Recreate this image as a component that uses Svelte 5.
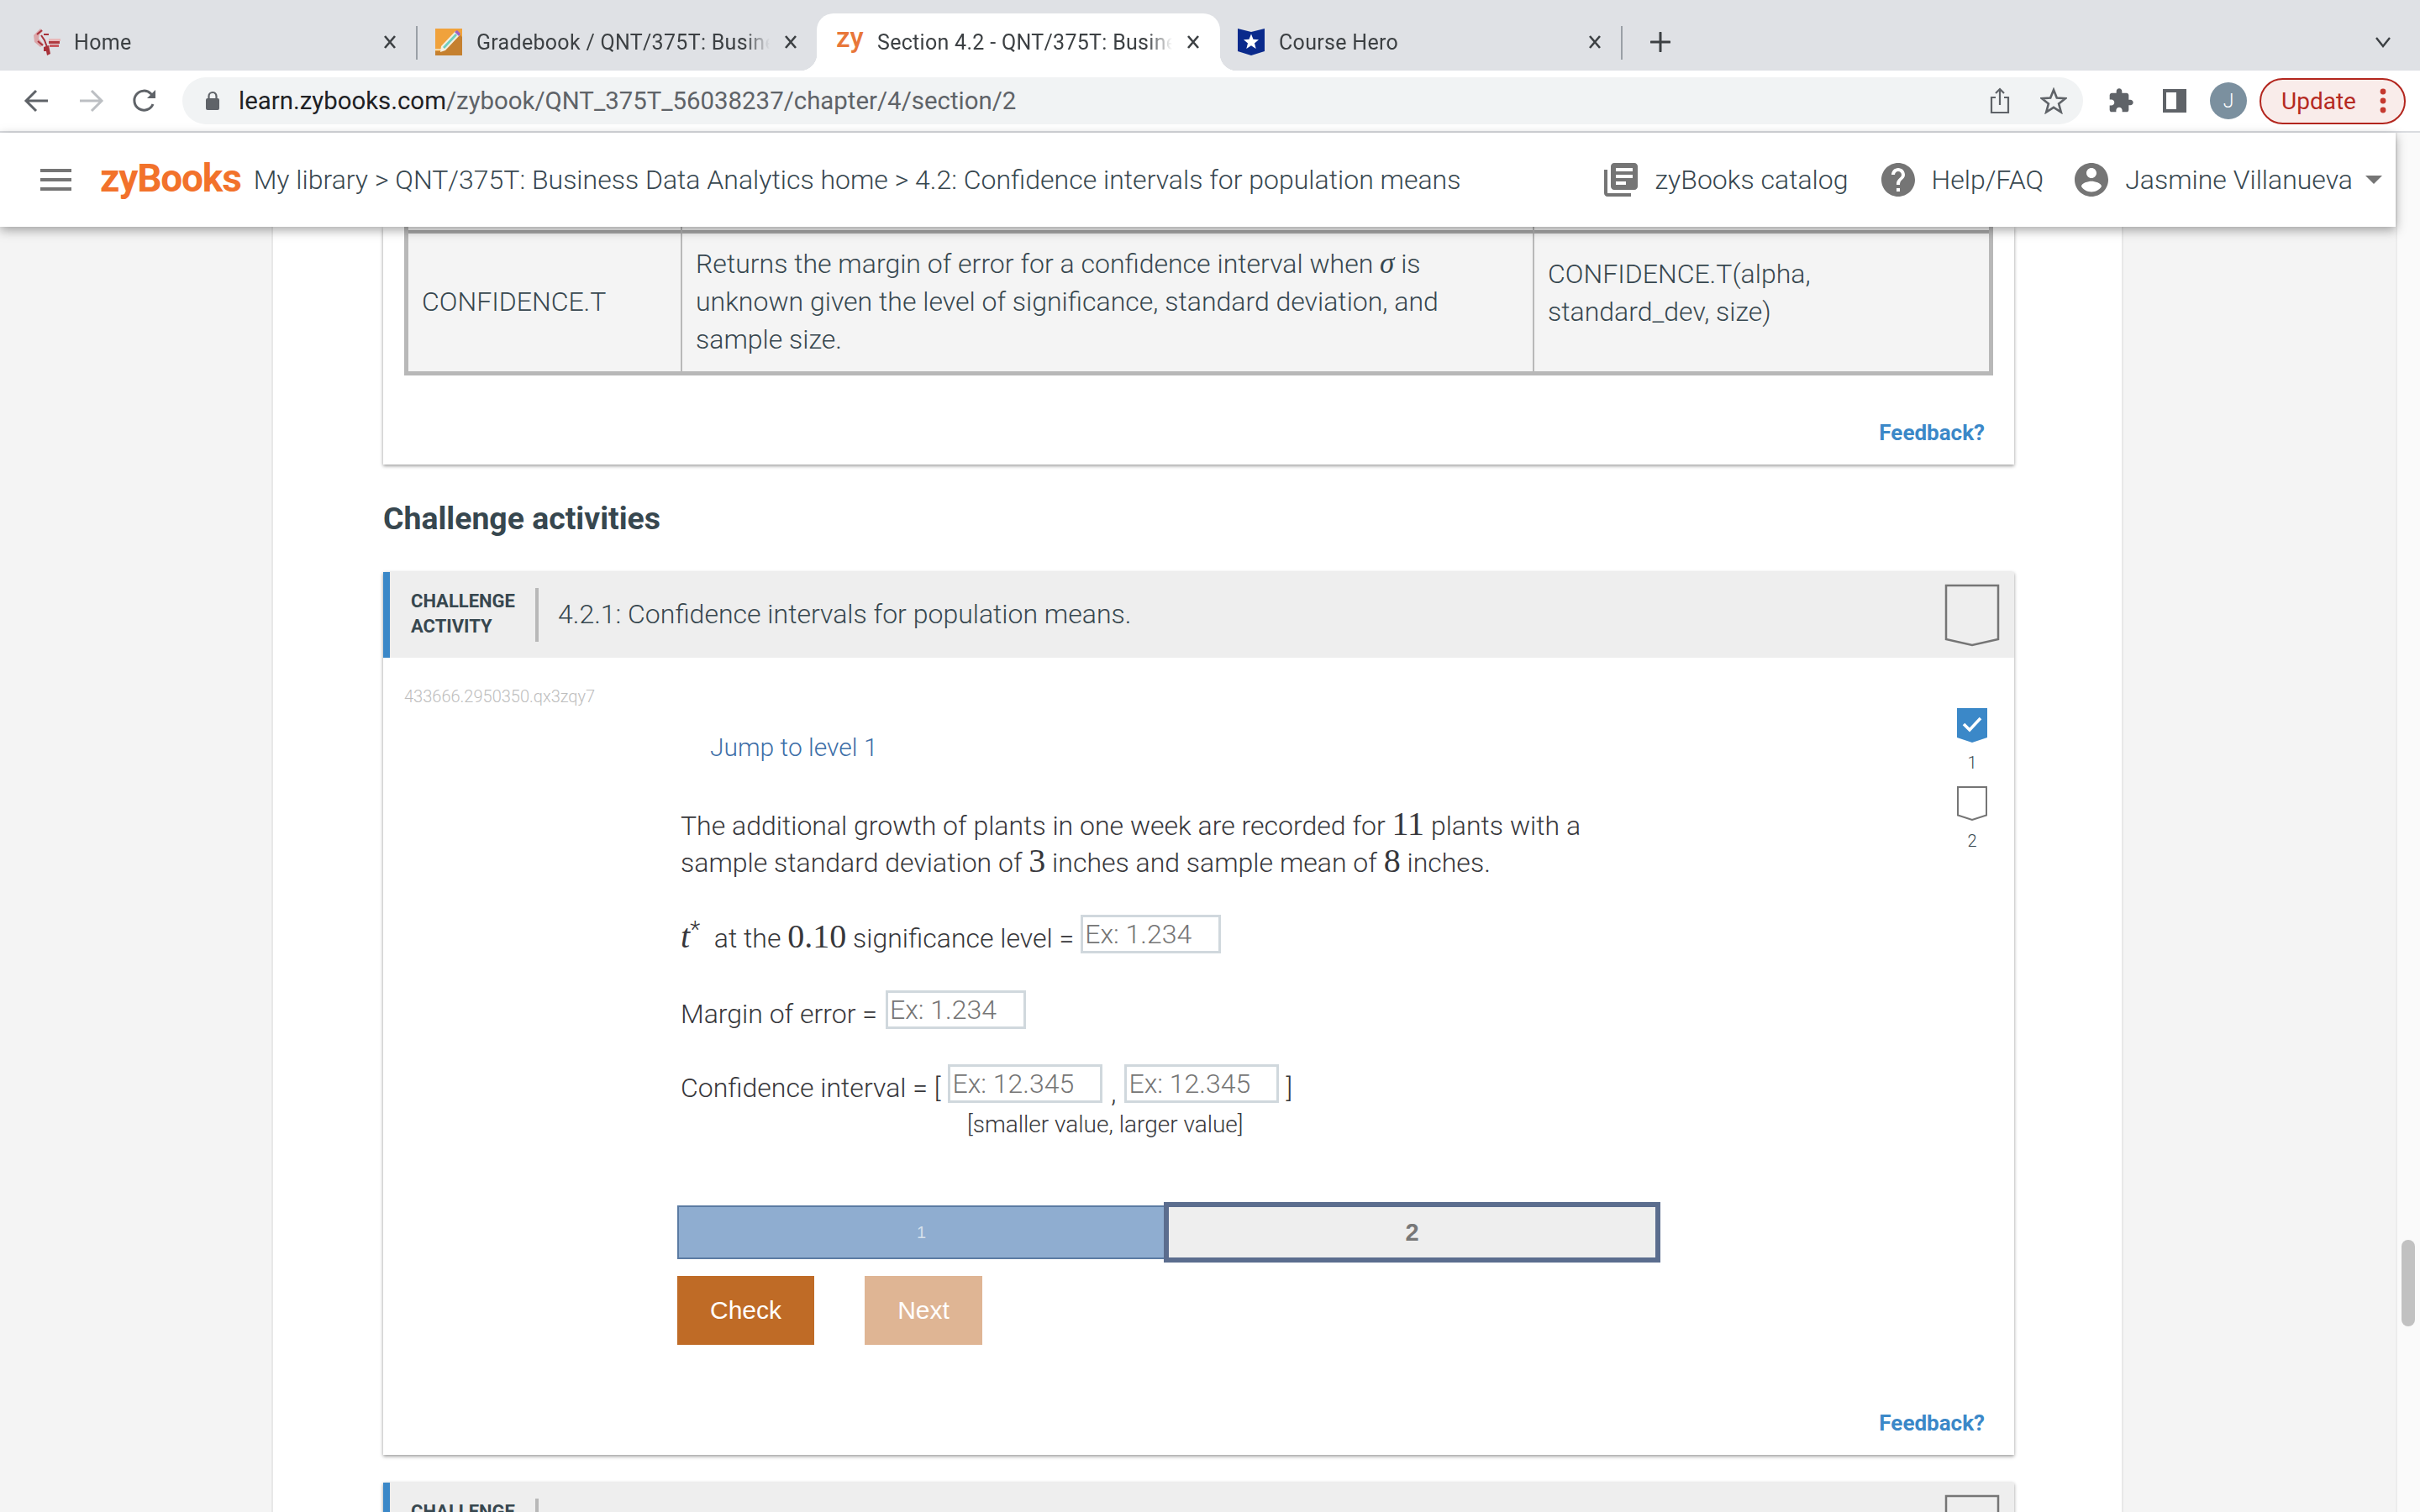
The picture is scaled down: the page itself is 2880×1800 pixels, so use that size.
<script>
  const tabs = [
    { title: 'Home', icon: 'home', width: 495 },
    { title: 'Gradebook / QNT/375T: Business Data', icon: 'grade', width: 475 },
    { title: 'Section 4.2 - QNT/375T: Business Data', icon: 'zy', width: 480, active: true },
    { title: 'Course Hero', icon: 'hero', width: 477 }
  ];
  const mid = [1, 3];
</script>

{#snippet activityHead(title)}
  <div class="activity-head">
    <div class="kind">CHALLENGE<br />ACTIVITY</div>
    <div class="activity-title">{title}</div>
    <svg class="badge-lg" width="66" height="75" viewBox="0 0 66 75">
      <path d="M2 2H64V66L33 73L2 66Z" fill="none" stroke="#757575" stroke-width="2.5" />
    </svg>
  </div>
{/snippet}

<div class="screen">
  <div class="tabstrip">
    {#each tabs as tab, i}
      <div class="tab" class:active={tab.active} class:mid={mid.includes(i)} style="width: {tab.width}px">
        {#if tab.icon === 'home'}
          <svg class="fav" width="32" height="32" viewBox="0 0 32 32">
            <path d="M8 0L0 8L1 16L8 22L12 19L6 12L7 7L11 3Z" fill="#dba6a9" />
            <path d="M4 7L10 2M5 15L11 20M9 8L13 14L16 22M12 7H18" fill="none" stroke="#a8323a" stroke-width="2" />
            <rect x="18" y="12" width="14" height="3" fill="#e8b8ba" />
            <rect x="18" y="15" width="13" height="3" fill="#b03a40" />
            <rect x="19" y="19" width="11" height="3" fill="#c85a60" />
            <path d="M12 22L18 20L20 30L16 32L15 27L12 27Z" fill="#a8323a" />
          </svg>
        {:else if tab.icon === 'grade'}
          <svg class="fav" width="32" height="32" viewBox="0 0 32 32">
            <rect width="32" height="32" fill="#f0a23c" />
            <path d="M0 32V27H7L29 7L32 10V32Z" fill="#c5802f" />
            <path d="M0 24H7V26H0Z" fill="#f6d9a8" />
            <path d="M6 28L7 21L24 3L29 8L12 26Z" fill="#f5efe0" />
            <path d="M9 22L24 6L26 8L11 24Z" fill="#6fcfc0" />
            <path d="M23 4L26 2L30 6L28 9Z" fill="#9a62c8" />
          </svg>
        {:else if tab.icon === 'zy'}
          <span class="fav zy">zy</span>
        {:else}
          <svg class="fav" width="32" height="32" viewBox="0 0 32 32">
            <path d="M0 0L16 4L32 0V27L16 32L0 27Z" fill="#0a2a8c" />
            <path d="M16 6.5L18.5 12.8L25 13.2L20 17.4L21.7 24L16 20.3L10.3 24L12 17.4L7 13.2L13.5 12.8Z" fill="#fff" />
          </svg>
        {/if}
        <span class="tab-title">{tab.title}</span>
        <svg class="close" width="16" height="16" viewBox="0 0 16 16">
          <path d="M2 1L14 15M14 1L2 15" stroke="#3c4043" stroke-width="2.6" />
        </svg>
      </div>
      {#if i === 0}<div class="sep"></div>{/if}
    {/each}
    <div class="sep"></div>
    <svg class="plus" width="24" height="24" viewBox="0 0 24 24">
      <path d="M12 1V23M1 12H23" stroke="#3c4043" stroke-width="3" stroke-linecap="round" />
    </svg>
    <svg class="chevron" width="20" height="14" viewBox="0 0 20 14">
      <path d="M2 2L10 12L18 2" fill="none" stroke="#3c4043" stroke-width="2.4" />
    </svg>
  </div>

  <div class="toolbar">
    <svg class="nav-icon first" width="32" height="32" viewBox="0 0 32 32">
      <path d="M29 16H4M15 4L3 16L15 28" fill="none" stroke="#5f6368" stroke-width="3" />
    </svg>
    <svg class="nav-icon" width="32" height="32" viewBox="0 0 32 32">
      <path d="M3 16H28M17 4L29 16L17 28" fill="none" stroke="#bcbfc3" stroke-width="3" />
    </svg>
    <svg class="nav-icon" width="32" height="32" viewBox="0 0 32 32">
      <path d="M26 20A11.5 11.5 0 1 1 23.5 7.5L27 11" fill="none" stroke="#5f6368" stroke-width="3" />
      <path d="M29 3V13H19Z" fill="#5f6368" />
    </svg>
    <div class="omnibox">
      <svg class="lock" width="18" height="24" viewBox="0 0 18 24">
        <path d="M4.5 10V6.5a4.5 4.5 0 0 1 9 0V10" fill="none" stroke="#5f6368" stroke-width="2.2" />
        <rect x="1" y="9" width="16" height="14" rx="2" fill="#5f6368" />
      </svg>
      <span class="url"><b>learn.zybooks.com</b>/zybook/QNT_375T_56038237/chapter/4/section/2</span>
      <svg class="share" width="26" height="32" viewBox="0 0 26 32">
        <path d="M8 12H3V30H23V12H18M13 21V2M8 7L13 2L18 7" fill="none" stroke="#5f6368" stroke-width="2.2" />
      </svg>
      <svg class="star" width="32" height="32" viewBox="0 0 32 32">
        <path d="M16 3l3.8 9.6 10.2.6-7.9 6.4 2.7 9.9-8.8-5.6-8.8 5.6 2.7-9.9-7.9-6.4 10.2-.6z" fill="none" stroke="#5f6368" stroke-width="2.6" />
      </svg>
    </div>
    <svg class="puzzle" width="32" height="32" viewBox="0 0 24 24">
      <path d="M20.5 11H19V7c0-1.1-.9-2-2-2h-4V3.5C13 2.12 11.88 1 10.5 1S8 2.12 8 3.5V5H4c-1.1 0-1.99.9-1.99 2v3.8H3.5c1.49 0 2.7 1.21 2.7 2.7s-1.21 2.7-2.7 2.7H2V20c0 1.1.9 2 2 2h3.8v-1.5c0-1.49 1.21-2.7 2.7-2.7 1.49 0 2.7 1.21 2.7 2.7V22H17c1.1 0 2-.9 2-2v-4h1.5c1.38 0 2.5-1.12 2.5-2.5S21.88 11 20.5 11z" fill="#5f6368" />
    </svg>
    <div class="side-panel"></div>
    <div class="avatar">J</div>
    <div class="update">
      <span>Update</span>
      <svg width="8" height="32" viewBox="0 0 8 32">
        <circle cx="4" cy="5" r="3.4" fill="#c5392f" /><circle cx="4" cy="16" r="3.4" fill="#c5392f" /><circle cx="4" cy="27" r="3.4" fill="#c5392f" />
      </svg>
    </div>
  </div>

  <div class="viewport">
    <div class="page">
      <header class="app-header">
        <div class="burger"><i></i><i></i><i></i></div>
        <span class="logo">zyBooks</span>
        <span class="crumbs">My library &gt; QNT/375T: Business Data Analytics home &gt; 4.2: Confidence intervals for population means</span>
        <div class="head-right">
          <svg width="48" height="48" viewBox="0 0 24 24">
            <path d="M4 6H2v14c0 1.1.9 2 2 2h14v-2H4V6zm16-4H8c-1.1 0-2 .9-2 2v12c0 1.1.9 2 2 2h12c1.1 0 2-.9 2-2V4c0-1.1-.9-2-2-2zm-1 9H9V9h10v2zm-4 4H9v-2h6v2zm4-8H9V5h10v2z" fill="#757575" />
          </svg>
          <span class="head-link one">zyBooks catalog</span>
          <svg width="48" height="48" viewBox="0 0 24 24">
            <path d="M12 2C6.48 2 2 6.48 2 12s4.48 10 10 10 10-4.48 10-10S17.52 2 12 2zm1 17h-2v-2h2v2zm2.07-7.75l-.9.92C13.45 12.9 13 13.5 13 15h-2v-.5c0-1.1.45-2.1 1.17-2.83l1.24-1.26c.37-.36.59-.86.59-1.41 0-1.1-.9-2-2-2s-2 .9-2 2H8c0-2.21 1.79-4 4-4s4 1.79 4 4c0 .88-.36 1.68-.93 2.25z" fill="#757575" />
          </svg>
          <span class="head-link two">Help/FAQ</span>
          <svg width="48" height="48" viewBox="0 0 24 24">
            <path d="M12 2C6.48 2 2 6.48 2 12s4.48 10 10 10 10-4.48 10-10S17.52 2 12 2zm0 3c1.66 0 3 1.34 3 3s-1.34 3-3 3-3-1.34-3-3 1.34-3 3-3zm0 14.2c-2.5 0-4.71-1.28-6-3.22.03-1.99 4-3.08 6-3.08 1.99 0 5.97 1.09 6 3.08-1.29 1.94-3.5 3.22-6 3.22z" fill="#757575" />
          </svg>
          <span class="head-link three">Jasmine Villanueva</span>
          <svg class="caret" width="20" height="10" viewBox="0 0 20 10"><path d="M0 0H20L10 10Z" fill="#757575" /></svg>
        </div>
      </header>

      <main class="column">
        <section class="card table-card">
          <div class="func-table">
            <div class="sliver"></div>
            <div class="sliver"></div>
            <div class="sliver"></div>
            <div class="cell name">CONFIDENCE.T</div>
            <div class="cell">Returns the margin of error for a confidence interval when <em class="sigma">σ</em> is unknown given the level of significance, standard deviation, and sample size.</div>
            <div class="cell syntax">CONFIDENCE.T(alpha, standard_dev, size)</div>
          </div>
          <a class="feedback first-fb" href="#top">Feedback?</a>
        </section>

        <h2>Challenge activities</h2>

        <section class="card activity">
          {@render activityHead('4.2.1: Confidence intervals for population means.')}
          <div class="activity-body">
            <div class="work">
              <div class="activity-id">433666.2950350.qx3zqy7</div>
              <div class="problem">
                <a class="jump" href="#top">Jump to level 1</a>
                <p class="statement">The additional growth of plants in one week are recorded for <span class="num">11</span> plants with a sample standard deviation of <span class="num">3</span> inches and sample mean of <span class="num">8</span> inches.</p>
                <div class="q q1">
                  <span class="lbl"><em class="t">t</em><sup>*</sup> at the <span class="num">0.10</span> significance level =</span>
                  <input class="short" placeholder="Ex: 1.234" />
                </div>
                <div class="q q2">
                  <span class="lbl">Margin of error =</span>
                  <input class="short" placeholder="Ex: 1.234" />
                </div>
                <div class="q q3">
                  <span class="lbl">Confidence interval = [</span>
                  <input class="long" placeholder="Ex: 12.345" />
                  <span class="comma">,</span>
                  <input class="long" placeholder="Ex: 12.345" />
                  <span class="lbl close-br">]</span>
                </div>
                <div class="hint">[smaller value, larger value]</div>
                <div class="levels-bar">
                  <div class="seg done">1</div>
                  <div class="seg current">2</div>
                </div>
                <div class="actions">
                  <button class="check">Check</button>
                  <button class="next">Next</button>
                </div>
              </div>
            </div>
            <div class="level-list">
              <svg width="36" height="41" viewBox="0 0 36 41">
                <path d="M0 0H36V35L18 41L0 35Z" fill="#3b88c8" />
                <path d="M8 19L15 26L28 12" fill="none" stroke="#fff" stroke-width="3.6" />
              </svg>
              <span>1</span>
              <svg width="36" height="41" viewBox="0 0 36 41">
                <path d="M1 1H35V34.5L18 40L1 34.5Z" fill="none" stroke="#757575" stroke-width="2" />
              </svg>
              <span>2</span>
            </div>
          </div>
          <a class="feedback" href="#top">Feedback?</a>
        </section>

        <section class="card activity next-card">
          {@render activityHead('')}
        </section>
      </main>
    </div>
    <div class="scrollbar"><div class="thumb"></div></div>
  </div>
</div>

<style>
  :global(body) {
    margin: 0;
  }

  .screen {
    width: 2880px;
    height: 1800px;
    overflow: hidden;
    display: flex;
    flex-direction: column;
    font-family: Roboto, "Liberation Sans", sans-serif;
    background: #fff;
  }

  /* browser chrome */
  .tabstrip {
    height: 84px;
    flex: none;
    background: #dfe1e5;
    display: flex;
    align-items: flex-end;
  }

  .tab {
    height: 68px;
    box-sizing: border-box;
    padding: 0 23px 0 40px;
    display: flex;
    align-items: center;
    flex: none;
    position: relative;
    color: #3c4043;
  }

  .tab.mid {
    padding-left: 21px;
  }

  .tab.active {
    background: #fff;
    border-radius: 20px 20px 0 0;
    padding-left: 23px;
    padding-right: 24px;
  }

  .tab.active::before,
  .tab.active::after {
    content: '';
    position: absolute;
    bottom: 0;
    width: 20px;
    height: 20px;
  }

  .tab.active::before {
    left: -20px;
    background: radial-gradient(circle at 0 0, #dfe1e5 20px, #fff 20.5px);
  }

  .tab.active::after {
    right: -20px;
    background: radial-gradient(circle at 100% 0, #dfe1e5 20px, #fff 20.5px);
  }

  .fav {
    flex: none;
    width: 32px;
  }

  .zy {
    color: #e8773a;
    font-weight: 500;
    font-size: 33px;
    line-height: 32px;
    margin-top: -10px;
  }

  .tab-title {
    flex: 1;
    min-width: 0;
    margin-left: 16px;
    margin-right: 17px;
    font-size: 25px;
    letter-spacing: 0.3px;
    white-space: nowrap;
    overflow: hidden;
    mask-image: linear-gradient(to right, #000 calc(100% - 30px), transparent);
  }

  .tab.mid .tab-title,
  .tab.active .tab-title {
    margin-left: 17px;
  }

  .close {
    flex: none;
  }

  .sep {
    width: 2px;
    height: 40px;
    margin-bottom: 13px;
    background: #9aa0a6;
    flex: none;
  }

  .plus {
    margin: 0 0 22px 33px;
  }

  .chevron {
    margin: 0 34px 27px auto;
  }

  .toolbar {
    height: 72px;
    flex: none;
    background: #fff;
    border-bottom: 2px solid #dadce0;
    display: flex;
    align-items: center;
  }

  .nav-icon {
    margin-left: 32px;
    flex: none;
  }

  .nav-icon.first {
    margin-left: 28px;
  }

  .omnibox {
    margin-left: 29px;
    width: 2262px;
    height: 56px;
    border-radius: 28px;
    background: #f1f3f4;
    display: flex;
    align-items: center;
    box-sizing: border-box;
    padding-left: 27px;
    flex: none;
  }

  .url {
    margin-left: 22px;
    font-size: 29.4px;
    color: #5f6368;
  }

  .url b {
    font-weight: 400;
    color: #202124;
  }

  .share {
    margin-left: auto;
  }

  .star {
    margin: 0 19px 0 35px;
  }

  .puzzle {
    margin-left: 29px;
    flex: none;
  }

  .side-panel {
    margin-left: 34px;
    width: 28px;
    height: 28px;
    box-sizing: border-box;
    border: 4px solid #5f6368;
    border-right-width: 12px;
    flex: none;
  }

  .avatar {
    margin-left: 28px;
    width: 44px;
    height: 44px;
    border-radius: 50%;
    background: #7b909f;
    color: #fff;
    font-size: 23px;
    font-weight: 300;
    display: flex;
    align-items: center;
    justify-content: center;
    flex: none;
  }

  .update {
    margin-left: 15px;
    width: 174px;
    height: 55px;
    box-sizing: border-box;
    border: 2.5px solid #b3261e;
    border-radius: 28px;
    background: #f9ecea;
    color: #b5291f;
    font-size: 28px;
    display: flex;
    align-items: center;
    padding-left: 24px;
    flex: none;
  }

  .update svg {
    margin-left: 28px;
  }

  /* page */
  .viewport {
    flex: 1;
    min-height: 0;
    display: flex;
  }

  .page {
    width: 2851px;
    flex: none;
    background: #f4f4f4;
    color: #37474f;
    font-weight: 300;
  }

  .app-header {
    height: 112px;
    background: #fff;
    display: flex;
    align-items: center;
    position: relative;
    z-index: 2;
    box-shadow: 0 4px 12px rgba(0, 0, 0, 0.35);
  }

  .burger {
    margin-left: 48px;
    width: 37px;
    display: flex;
    flex-direction: column;
    gap: 7px;
  }

  .burger i {
    height: 4px;
    background: #757575;
  }

  .logo {
    margin-left: 34px;
    margin-bottom: 4px;
    color: #f2722b;
    font-weight: 700;
    font-size: 46px;
    letter-spacing: -1.2px;
  }

  .crumbs {
    margin-left: 15px;
    font-size: 32px;
    white-space: nowrap;
  }

  .head-right {
    margin-left: auto;
    display: flex;
    align-items: center;
    font-size: 32px;
    padding-right: 16px;
  }

  .head-link {
    white-space: nowrap;
  }

  .head-link.one {
    margin: 0 35px 0 17px;
  }

  .head-link.two {
    margin: 0 33px 0 16px;
  }

  .head-link.three {
    margin-left: 16px;
  }

  .caret {
    margin-left: 15px;
  }

  .column {
    margin-left: 325px;
    width: 2200px;
    box-sizing: border-box;
    height: 1530px;
    padding-left: 131px;
    background: #fff;
    box-shadow: 0 0 0 2px #e8e8e8;
  }

  .card {
    width: 1941px;
    background: #fff;
    box-shadow: 0 2px 4px rgba(0, 0, 0, 0.35), 0 0 4px rgba(0, 0, 0, 0.08);
  }

  .table-card {
    height: 283px;
    position: relative;
  }

  .func-table {
    margin-left: 25px;
    width: 1891px;
    box-sizing: border-box;
    border: 5px solid #b8b8b8;
    border-top: 0;
    background: #f4f4f4;
    display: grid;
    grid-template-columns: 326px 1014px 1fr;
    font-size: 32px;
    line-height: 45px;
  }

  .sliver {
    height: 4px;
    border-bottom: 4px solid #a8a8a8;
    border-right: 2px solid #b8b8b8;
  }

  .cell {
    height: 164px;
    box-sizing: border-box;
    padding: 14px 16px 0;
    border-right: 2px solid #b8b8b8;
  }

  .cell:last-child,
  .sliver:nth-child(3) {
    border-right: 0;
  }

  .cell.name {
    padding-top: 59px;
    padding-left: 16px;
  }

  .cell.syntax {
    padding-top: 26px;
  }

  .sigma,
  .t {
    font-family: "Liberation Serif", serif;
    font-style: italic;
    font-weight: 400;
  }

  .sigma {
    font-size: 35px;
    line-height: 0;
  }

  .t {
    font-size: 40px;
    line-height: 0;
  }

  .feedback {
    display: block;
    line-height: 30px;
    font-size: 26px;
    font-weight: 700;
    color: #3b88c8;
    text-decoration: none;
    text-align: right;
    padding-right: 35px;
  }

  .first-fb {
    margin-top: 53px;
  }

  h2 {
    margin: 0;
    padding: 40px 0 0;
    height: 128px;
    box-sizing: border-box;
    font-size: 37.4px;
    line-height: 48px;
    font-weight: 700;
  }

  .activity {
    height: 1051px;
  }

  .activity-head {
    height: 102px;
    box-sizing: border-box;
    background: #eee;
    border-left: 8px solid #3b88c8;
    display: flex;
    align-items: center;
    padding-left: 25px;
  }

  .kind {
    width: 148px;
    flex: none;
    margin-top: -3px;
    font-size: 22px;
    line-height: 30px;
    font-weight: 700;
  }

  .activity-title {
    height: 64px;
    border-left: 4px solid #b8b8b8;
    padding-left: 23px;
    font-size: 32px;
    line-height: 62px;
  }

  .badge-lg {
    margin-left: auto;
    margin-right: 17px;
  }

  .activity-body {
    display: flex;
    justify-content: space-between;
    padding: 34px 32px 0 25px;
  }

  .activity-id {
    font-size: 20px;
    line-height: 24px;
    color: #bdbdbd;
  }

  .problem {
    margin-left: 329px;
    color: #37373b;
  }

  .jump {
    display: block;
    margin: 27px 0 0 35px;
    font-size: 30px;
    line-height: 44px;
    color: #3e6fa8;
    text-decoration: none;
  }

  .statement {
    margin: 49px 0 0;
    width: 1100px;
    font-size: 32px;
    line-height: 44px;
  }

  .num {
    font-family: "Liberation Serif", serif;
    font-weight: 400;
    font-size: 40px;
    line-height: 0;
  }

  .q {
    display: flex;
    align-items: flex-start;
    height: 46px;
    font-size: 32px;
    line-height: 44px;
    white-space: nowrap;
  }

  .q1 {
    margin-top: 40px;
  }

  .q2 {
    margin-top: 44px;
  }

  .q3 {
    margin-top: 42px;
  }

  .lbl {
    margin-top: 6px;
    margin-right: 9px;
  }

  .q1 .lbl {
    margin-right: 8px;
  }

  .q2 .lbl {
    margin-right: 10px;
  }

  sup {
    font-size: 28px;
    line-height: 0;
    margin-right: 9px;
  }

  input {
    height: 46px;
    box-sizing: border-box;
    border: 3px solid #d0d8dd;
    background: #fff;
    padding: 0 2px;
    font-family: inherit;
    font-weight: 300;
    font-size: 32px;
    outline: 0;
  }

  input::placeholder {
    color: #757575;
    opacity: 1;
  }

  .short {
    width: 167px;
  }

  .long {
    width: 184px;
  }

  .comma {
    width: 26px;
    text-align: center;
    margin-top: 12px;
  }

  .close-br {
    margin-left: 8px;
    margin-right: 0;
  }

  .hint {
    margin: 8px 0 0 341px;
    font-size: 28px;
    line-height: 36px;
  }

  .levels-bar {
    margin: 74px 0 0 -4px;
    display: flex;
    align-items: center;
    font-family: "Liberation Sans", sans-serif;
  }

  .seg {
    box-sizing: border-box;
    display: flex;
    align-items: center;
    justify-content: center;
  }

  .done {
    width: 579px;
    height: 64px;
    background: #8fadd0;
    border: 2px solid #5b7ba3;
    border-right: 0;
    color: #d5e0ec;
    font-size: 20px;
  }

  .current {
    width: 591px;
    height: 72px;
    background: #eee;
    border: 6px solid #5b6d8e;
    color: #777;
    font-size: 29px;
    font-weight: 700;
  }

  .actions {
    margin: 16px 0 0 -4px;
    display: flex;
    gap: 60px;
  }

  button {
    height: 82px;
    border: 0;
    padding: 0;
    color: #fff;
    font-family: "Liberation Sans", sans-serif;
    font-size: 30px;
  }

  .check {
    width: 163px;
    background: #bf6b26;
  }

  .next {
    width: 140px;
    background: #dfb594;
  }

  .level-list {
    margin-top: 26px;
    width: 36px;
    display: flex;
    flex-direction: column;
    align-items: center;
    font-size: 20px;
    line-height: 24px;
  }

  .level-list span {
    margin: 12px 0 16px;
  }

  .activity-body + .feedback {
    margin-top: 78px;
  }

  .next-card {
    margin-top: 33px;
    height: 102px;
  }

  .scrollbar {
    flex: 1;
    background: #fafafa;
    border-left: 2px solid #ececec;
    position: relative;
  }

  .thumb {
    position: absolute;
    left: 5px;
    top: 1318px;
    width: 16px;
    height: 103px;
    border-radius: 8px;
    background: #c1c1c1;
  }
</style>
